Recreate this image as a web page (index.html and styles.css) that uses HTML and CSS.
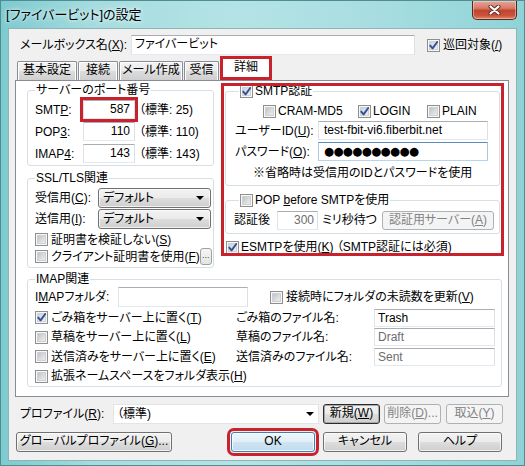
FILE: index.html
```html
<!DOCTYPE html>
<html lang="ja">
<head>
<meta charset="utf-8">
<title>設定</title>
<link rel="stylesheet" href="styles.css">
</head>
<body>
<div class="window">
  <div class="titlebar">
    <span class="title">[ファイバービット]の設定</span>
    <div class="close">
      <svg width="13" height="10" viewBox="0 0 13 10"><path class="x-shadow" d="M2.5 1.5 L10.5 8.5 M10.5 1.5 L2.5 8.5"/><path class="x-line" d="M2.5 1.5 L10.5 8.5 M10.5 1.5 L2.5 8.5"/></svg>
    </div>
  </div>
  <div class="client">
    <div class="name-row">
      <span class="name-label">メールボックス名(<u>X</u>):</span>
      <div class="edit name-edit">ファイバービット</div>
      <span class="cb on name-cb"><svg viewBox="0 0 11 11"><path d="M2.2 5.6 L4.6 8.4 L9.2 2"/></svg></span>
      <span class="cb-text">巡回対象(<u>/</u>)</span>
    </div>

    <div class="tabs">
      <div class="tab t1">基本設定</div>
      <div class="tab t2">接続</div>
      <div class="tab t3">メール作成</div>
      <div class="tab t4">受信</div>
      <div class="tab sel">詳細</div>
    </div>

    <div class="panel">
      <div class="top-area">
        <div class="left-col">
          <fieldset class="group g-port">
            <legend>サーバーのポート番号</legend>
            <div class="port-row"><span class="port-label">SMT<u>P</u>:</span><div class="edit num mark">587</div><span class="std">（標準: 25)</span></div>
            <div class="port-row"><span class="port-label">POP<u>3</u>:</span><div class="edit num">110</div><span class="std">（標準: 110)</span></div>
            <div class="port-row"><span class="port-label">IMAP<u>4</u>:</span><div class="edit num">143</div><span class="std">（標準: 143)</span></div>
          </fieldset>
          <fieldset class="group g-ssl">
            <legend>SSL/TLS関連</legend>
            <div class="sel-row"><span class="sel-label">受信用(<u>C</u>):</span><div class="dropdown"><span>デフォルト</span><span class="arrow"></span></div></div>
            <div class="sel-row"><span class="sel-label">送信用(<u>I</u>):</span><div class="dropdown"><span>デフォルト</span><span class="arrow"></span></div></div>
            <div class="chk-row first"><span class="cb"></span><span class="cb-text">証明書を検証しない(<u>S</u>)</span></div>
            <div class="chk-row"><span class="cb"></span><span class="cb-text">クライアント証明書を使用(<u>F</u>)</span><span class="mini">...</span></div>
          </fieldset>
        </div>

        <div class="smtp-box">
          <fieldset class="group g-auth">
            <legend><span class="cb on"><svg viewBox="0 0 11 11"><path d="M2.2 5.6 L4.6 8.4 L9.2 2"/></svg></span><span class="lg-text">SMTP認証</span></legend>
            <div class="auth-methods">
              <div class="m m1"><span class="cb"></span><span class="cb-text">CRAM-MD5</span></div>
              <div class="m m2"><span class="cb on"><svg viewBox="0 0 11 11"><path d="M2.2 5.6 L4.6 8.4 L9.2 2"/></svg></span><span class="cb-text">LOGIN</span></div>
              <div class="m m3"><span class="cb"></span><span class="cb-text">PLAIN</span></div>
            </div>
            <div class="field-row"><span class="f-label">ユーザーID(<u>U</u>):</span><div class="edit user">test-fbit-vi6.fiberbit.net</div></div>
            <div class="field-row"><span class="f-label">パスワード(<u>O</u>):</span><div class="edit user focus"><span class="dots">●●●●●●●●●●</span></div></div>
            <div class="note">※省略時は受信用のIDとパスワードを使用</div>
          </fieldset>
          <fieldset class="group g-pop">
            <legend><span class="cb"></span><span class="lg-text">POP <u>b</u>efore SMTPを使用</span></legend>
            <div class="pop-row">
              <span class="wait-label">認証後</span>
              <div class="edit wait">300</div>
              <span class="wait-unit">ミリ秒待つ</span>
              <span class="btn disabled auth-srv">認証用サーバー(<u>A</u>)</span>
            </div>
          </fieldset>
          <div class="esmtp-row"><span class="cb on"><svg viewBox="0 0 11 11"><path d="M2.2 5.6 L4.6 8.4 L9.2 2"/></svg></span><span class="esmtp-text">ESMTPを使用(<u>K</u>) （SMTP認証には必須)</span></div>
        </div>
      </div>

      <fieldset class="group g-imap">
        <legend>IMAP関連</legend>
        <div class="imap-top">
          <span class="imap-label">I<u>M</u>APフォルダ:</span>
          <div class="edit imap-folder"></div>
          <span class="cb upd-cb"></span><span class="cb-text">接続時にフォルダの未読数を更新(<u>V</u>)</span>
        </div>
        <div class="imap-grid">
          <div class="cell"><span class="cb on"><svg viewBox="0 0 11 11"><path d="M2.2 5.6 L4.6 8.4 L9.2 2"/></svg></span><span class="cb-text">ごみ箱をサーバー上に置く(<u>T</u>)</span></div>
          <div class="cell">ごみ箱のファイル名:</div>
          <div class="edit fname">Trash</div>

          <div class="cell"><span class="cb"></span><span class="cb-text">草稿をサーバー上に置く(<u>L</u>)</span></div>
          <div class="cell">草稿のファイル名:</div>
          <div class="edit fname gray">Draft</div>

          <div class="cell"><span class="cb"></span><span class="cb-text">送信済みをサーバー上に置く(<u>E</u>)</span></div>
          <div class="cell">送信済みのファイル名:</div>
          <div class="edit fname gray">Sent</div>

          <div class="cell wide"><span class="cb"></span><span class="cb-text">拡張ネームスペースをフォルダ表示(<u>H</u>)</span></div>
        </div>
      </fieldset>
    </div>

    <div class="profile-row">
      <span class="profile-label">プロファイル(<u>R</u>):</span>
      <div class="combo"><span>（標準)</span><span class="arrow"></span></div>
      <span class="btn strong b-new">新規(<u>W</u>)</span>
      <span class="btn disabled b-del">削除(<u>D</u>)...</span>
      <span class="btn disabled b-imp">取込(<u>Y</u>)</span>
    </div>

    <div class="btn-row">
      <span class="btn b-global">グローバルプロファイル(<u>G</u>)...</span>
      <span class="btn ok">OK</span>
      <span class="btn b-cancel">キャンセル</span>
      <span class="btn b-help">ヘルプ</span>
    </div>
  </div>
</div>
</body>
</html>
```

FILE: styles.css
```css
* { box-sizing: border-box; }

html, body {
  margin: 0;
  padding: 0;
}

body {
  width: 525px;
  height: 466px;
  overflow: hidden;
  font-family: "Liberation Sans", "Noto Sans CJK JP", sans-serif;
  font-size: 12px;
  line-height: 16px;
  font-feature-settings: "palt";
  color: #000;
}

u { text-decoration: underline; text-underline-offset: 1px; }

.window {
  width: 525px;
  height: 466px;
  display: flex;
  flex-direction: column;
  background: linear-gradient(90deg, #7ccacf 0%, #a6dcdf 18%, #b4e3e5 45%, #a9dee1 70%, #8fd3d7 100%);
  box-shadow: inset 0 0 0 1px #4f8d93;
}

.titlebar {
  height: 28px;
  flex-shrink: 0;
  display: flex;
  justify-content: space-between;
  align-items: flex-start;
}

.title {
  margin: 6px 0 0 6px;
  font-size: 13px;
  line-height: 18px;
  text-shadow: 0 0 6px #e8fbfb, 0 0 3px #e8fbfb;
}

.close {
  width: 45px;
  height: 19px;
  margin: 1px 8px 0 0;
  border: 1px solid #5a2622;
  border-top: none;
  border-radius: 0 0 5px 5px;
  background: linear-gradient(#e6a597 0%, #d77a68 40%, #c2432f 52%, #c8533a 80%, #e08567 100%);
  box-shadow: inset 0 0 0 1px rgba(255, 230, 220, 0.45);
  display: flex;
  align-items: center;
  justify-content: center;
}

.close svg { display: block; }
.x-shadow { stroke: #5b2b24; stroke-width: 4; stroke-linecap: round; fill: none; }
.x-line { stroke: #fff; stroke-width: 2.2; stroke-linecap: round; fill: none; }

.client {
  margin: 0 8px;
  height: 433px;
  flex-shrink: 0;
  background: #f0f0f0;
  border: 1px solid #8fb3b6;
}

/* generic controls */
.edit {
  background: #fff;
  border: 1px solid;
  border-color: #abadb3 #dbdfe6 #e3e9ef #e2e3ea;
  height: 20px;
  padding: 0 3px;
  line-height: 17px;
  white-space: nowrap;
  overflow: hidden;
}

.cb {
  display: inline-block;
  flex-shrink: 0;
  width: 13px;
  height: 13px;
  border: 1px solid #8e8f8f;
  background: linear-gradient(135deg, #b2b6bb 0%, #dfe0e2 60%, #f2f2f2 100%);
  box-shadow: inset 0 0 0 1px #f7f7f7, inset 0 0 0 2px #cfd1d4;
}

.cb.on {
  background: linear-gradient(135deg, #bccbe0 0%, #dfe6ef 60%, #f3f5f8 100%);
}

.cb svg {
  display: block;
  width: 11px;
  height: 11px;
}

.cb svg path {
  fill: none;
  stroke: #34508f;
  stroke-width: 1.9;
  stroke-linejoin: round;
  stroke-linecap: round;
}

.cb-text { margin-left: 3px; white-space: nowrap; }

.arrow {
  width: 0;
  height: 0;
  border-left: 4px solid transparent;
  border-right: 4px solid transparent;
  border-top: 4px solid #000;
}

.btn {
  display: inline-block;
  height: 20px;
  border: 1px solid #707070;
  border-radius: 3px;
  background: linear-gradient(#f2f2f2 0%, #ebebeb 50%, #dddddd 50%, #cfcfcf 100%);
  box-shadow: inset 0 0 0 1px rgba(255, 255, 255, 0.7);
  text-align: center;
  line-height: 17px;
  white-space: nowrap;
  flex-shrink: 0;
}

.btn.disabled {
  border-color: #adb2b5;
  background: #f4f4f4;
  box-shadow: none;
  color: #838383;
}

.btn.strong {
  border-color: #2b2b2b;
  box-shadow: inset 0 0 0 1px #a9a9a9;
}

/* name row */
.name-row {
  display: flex;
  align-items: center;
  height: 20px;
  margin-top: 6px;
  padding-left: 11px;
}

.name-label { width: 111px; white-space: nowrap; }
.name-edit { width: 284px; }
.name-cb { margin-left: 12px; }

/* tabs */
.tabs {
  display: flex;
  align-items: flex-end;
  height: 24px;
  margin-top: 1px;
  padding-left: 8px;
}

.tab {
  height: 19px;
  margin-right: 1px;
  border: 1px solid #898c95;
  border-bottom: none;
  border-radius: 2px 2px 0 0;
  background: linear-gradient(#f2f2f2 0%, #ebebeb 50%, #dddddd 50%, #cfcfcf 100%);
  box-shadow: inset 1px 1px 0 #fff, inset -1px 0 0 #fff;
  text-align: center;
  line-height: 17px;
  white-space: nowrap;
}

.t1 { width: 60px; }
.t2 { width: 40px; }
.t3 { width: 64px; }
.t4 { width: 35px; }

.tab.sel {
  width: 52px;
  height: 24px;
  border: 3px solid #c8232c;
  border-radius: 0;
  background: #fff;
  box-shadow: none;
  line-height: 16px;
}

/* panel */
.panel {
  margin-left: 6px;
  width: 494px;
  height: 317px;
  border: 1px solid #898c95;
  background: #fff;
  padding: 2px 0 0 11px;
}

.top-area {
  display: flex;
  height: 185px;
}

.left-col {
  width: 187px;
  display: flex;
  flex-direction: column;
}

fieldset.group {
  margin: 0;
  min-width: 0;
  padding: 0;
  border: 1px solid #d5dfe5;
  border-radius: 3px;
}

fieldset.group legend {
  padding: 0 1px;
  margin: 0;
  height: 14px;
  line-height: 14px;
  white-space: nowrap;
}

.g-port {
  height: 83px;
  padding: 3px 0 0 7px !important;
}

.port-row {
  display: flex;
  align-items: center;
  height: 19px;
  margin-bottom: 3px;
}

.port-label { width: 48px; }

.edit.num {
  width: 52px;
  height: 19px;
  text-align: right;
  padding-right: 4px;
}

.edit.mark {
  outline: 3px solid #c8232c;
  outline-offset: 0;
}

.std { margin-left: 4px; white-space: nowrap; }

.g-ssl {
  margin-top: 5px !important;
  height: 97px;
  padding: 3px 0 0 7px !important;
}

.sel-row {
  display: flex;
  align-items: center;
  height: 20px;
  margin-bottom: 1px;
}

.sel-label { width: 63px; white-space: nowrap; }

.dropdown {
  width: 113px;
  height: 20px;
  flex-shrink: 0;
  border: 1px solid #707070;
  border-radius: 3px;
  background: linear-gradient(#f2f2f2 0%, #ebebeb 50%, #dddddd 50%, #cfcfcf 100%);
  box-shadow: inset 0 0 0 1px rgba(255, 255, 255, 0.7);
  display: flex;
  align-items: center;
  justify-content: space-between;
  padding: 0 6px 0 4px;
  line-height: 17px;
}

.chk-row {
  display: flex;
  align-items: center;
  height: 17px;
}

.chk-row.first { margin-top: 2px; }

.mini {
  margin-left: auto;
  margin-right: 1px;
  width: 15px;
  height: 17px;
  border: 1px solid #a0a0a0;
  border-radius: 3px;
  background: linear-gradient(#f6f6f6, #e4e4e4);
  font-size: 9px;
  line-height: 12px;
  text-align: center;
  color: #444;
}

/* SMTP box */
.smtp-box {
  margin-left: 7px;
  width: 283px;
  height: 173px;
  outline: 3px solid #c8232c;
  outline-offset: -3px;
  padding: 1px 0 0 4px;
}

.g-auth {
  width: 275px;
  height: 102px;
}

.g-auth legend,
.g-pop legend {
  margin-left: 13px !important;
  display: flex;
  align-items: center;
}

.lg-text { margin-left: 2px; }

.auth-methods {
  display: flex;
  align-items: center;
  height: 16px;
  margin-top: 5px;
  padding-left: 37px;
}

.m { display: flex; align-items: center; }
.m .cb-text { margin-left: 2px; }
.m1 { width: 95px; }
.m2 { width: 69px; }

.field-row {
  display: flex;
  align-items: center;
  height: 19px;
  margin-top: 2px;
  padding-left: 9px;
}

.f-label { width: 83px; white-space: nowrap; }

.edit.user {
  width: 170px;
  height: 19px;
  padding-left: 5px;
}

.edit.focus {
  border-color: #5b8cc0 #a8c8e6 #b7d3ee #a8c8e6;
}

.dots {
  font-family: "DejaVu Sans", sans-serif;
  font-size: 11.5px;
  letter-spacing: -0.6px;
}

.note {
  margin-top: 4px;
  padding-left: 27px;
  height: 16px;
  white-space: nowrap;
}

.g-pop {
  width: 275px;
  height: 41px;
  margin-top: 7px !important;
}

.pop-row {
  display: flex;
  align-items: center;
  height: 20px;
  margin-top: 3px;
  padding-left: 8px;
}

.wait-label { width: 43px; }

.edit.wait {
  width: 41px;
  height: 19px;
  text-align: right;
  padding-right: 3px;
  color: #6d6d6d;
}

.wait-unit { width: 64px; padding-left: 4px; white-space: nowrap; }

.auth-srv { width: 112px; height: 19px; }

.esmtp-row {
  display: flex;
  align-items: center;
  height: 16px;
  margin-top: 5px;
  padding-left: 1px;
}

.esmtp-text { margin-left: 2px; white-space: nowrap; }

/* IMAP */
.g-imap {
  margin-top: 4px !important;
  width: 475px;
  height: 115px;
  padding: 1px 0 0 7px !important;
}

.imap-top {
  display: flex;
  align-items: center;
  height: 20px;
}

.imap-label { width: 83px; white-space: nowrap; }
.imap-folder { width: 130px; height: 20px; }
.upd-cb { margin-left: 22px; }

.imap-grid {
  display: grid;
  grid-template-columns: 201px 138px 121px;
  grid-auto-rows: 19.5px;
  align-items: center;
  margin-top: 1px;
}

.cell {
  display: flex;
  align-items: center;
  white-space: nowrap;
}

.edit.fname {
  height: 18px;
  line-height: 16px;
}

.gray { color: #6d6d6d; }

/* bottom rows */
.profile-row {
  display: flex;
  align-items: center;
  height: 20px;
  margin-top: 7px;
  padding-left: 11px;
}

.profile-label { width: 93px; white-space: nowrap; }

.combo {
  width: 206px;
  height: 20px;
  flex-shrink: 0;
  background: #fff;
  border: 1px solid #e1e4e9;
  display: flex;
  align-items: center;
  justify-content: space-between;
  padding: 0 4px 0 3px;
}

.b-new { margin-left: 4px; width: 57px; }
.b-del { margin-left: 4px; width: 57px; }
.b-imp { margin-left: 5px; width: 57px; }

.btn-row {
  display: flex;
  align-items: center;
  height: 20px;
  margin-top: 8px;
  padding-left: 7px;
}

.b-global { width: 156px; }

.btn.ok {
  margin-left: 59px;
  width: 84px;
  border-color: #3c7fb1;
  background: linear-gradient(#eef6fc 0%, #e0eef8 50%, #cfe4f3 50%, #c0dbef 100%);
  box-shadow: inset 0 0 0 1px rgba(255, 255, 255, 0.8);
  outline: 3px solid #c8232c;
  outline-offset: 1px;
}

.b-cancel { margin-left: 8px; width: 84px; }
.b-help { margin-left: 11px; width: 84px; }
```
